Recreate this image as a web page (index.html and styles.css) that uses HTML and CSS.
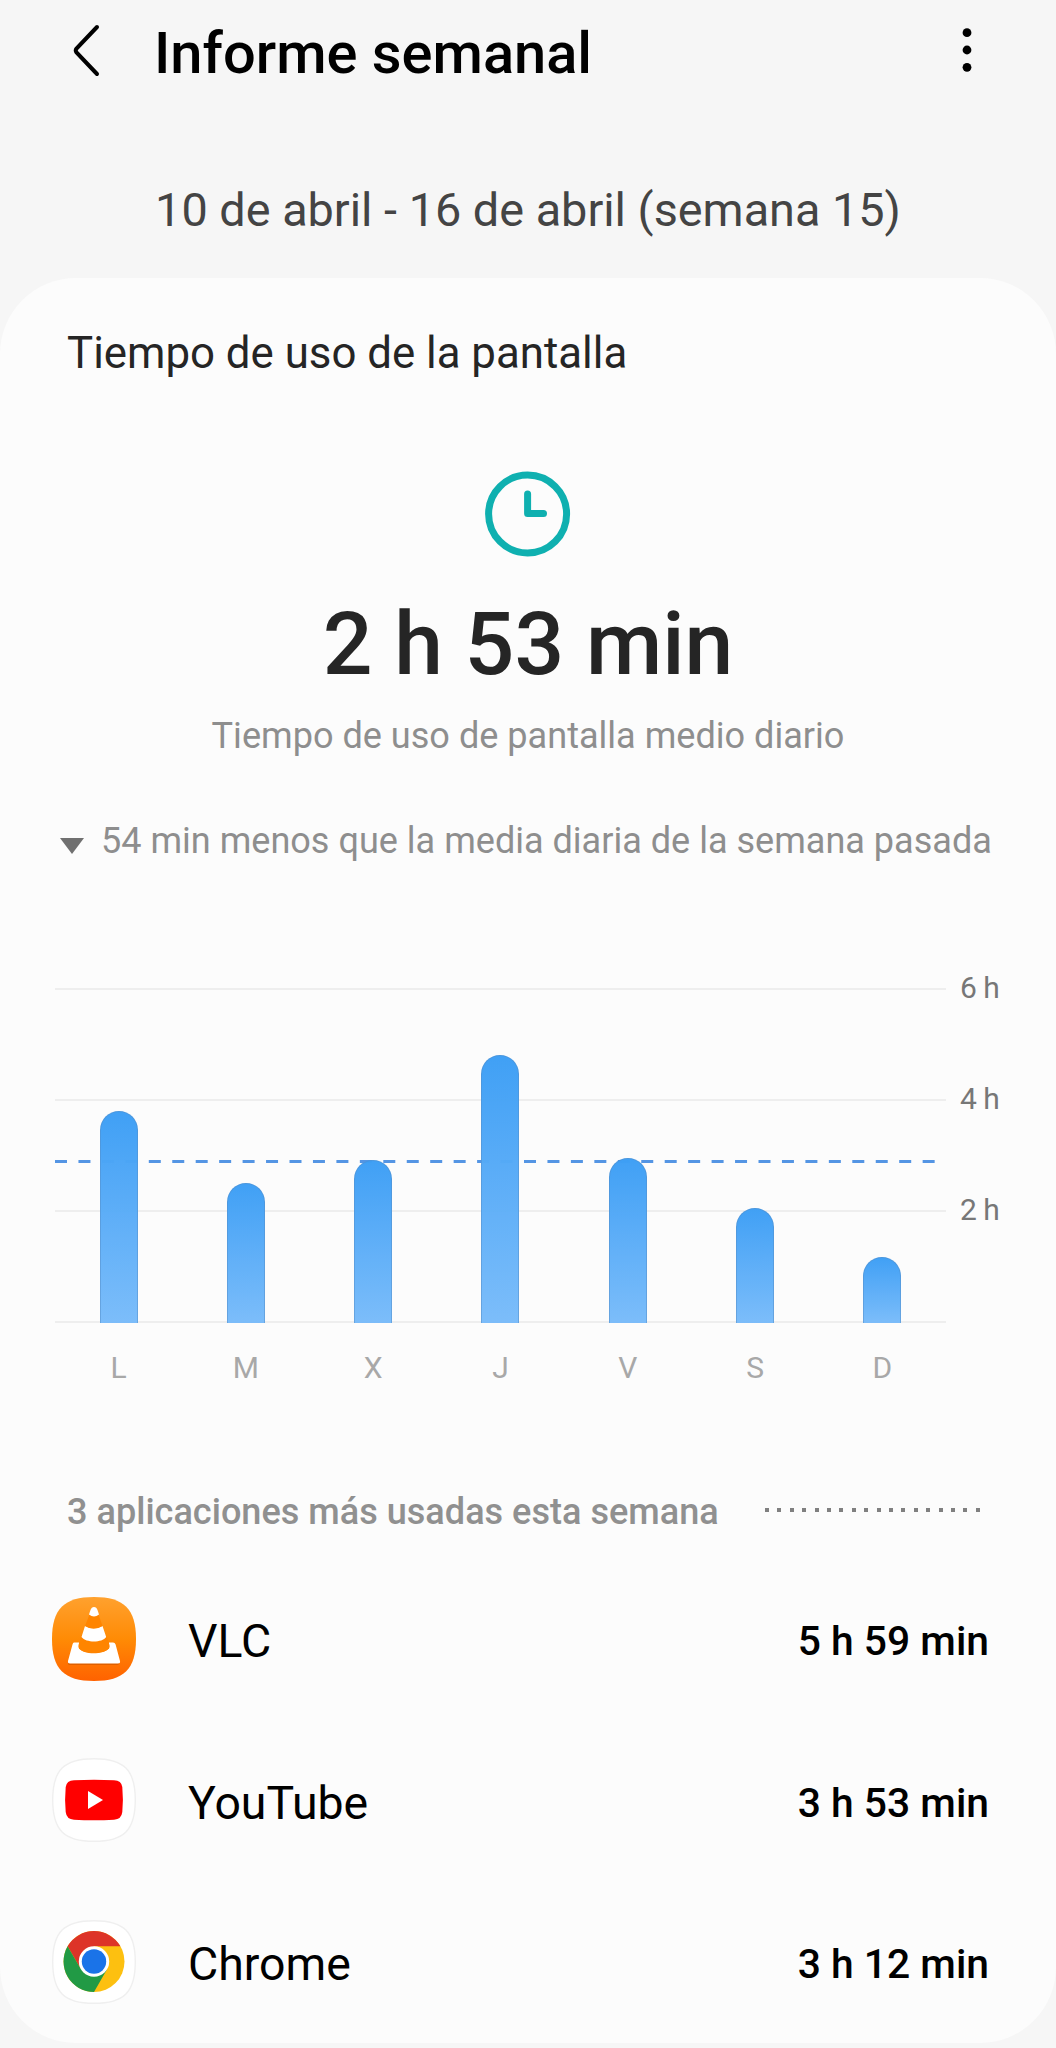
FILE: index.html
```html
<!DOCTYPE html>
<html lang="es">
<head>
  <meta charset="UTF-8">
  <meta name="viewport" content="width=device-width, initial-scale=1.0">
  <title>Informe semanal</title>
  <link rel="stylesheet" href="styles.css">
</head>
<body>
  <header class="top-bar">
    <svg class="back" width="32" height="56" viewBox="0 0 32 56">
      <path d="M28 5 L7.5 26.5 Q6 28.5 7.500 30.5 L28 52"/>
    </svg>
    <h1 class="title">Informe semanal</h1>
    <svg class="more" width="12" height="46" viewBox="0 0 12 46">
      <circle cx="6" cy="5.7" r="4.4"/>
      <circle cx="6" cy="23" r="4.4"/>
      <circle cx="6" cy="40.3" r="4.4"/>
    </svg>
  </header>
  <div class="week">10 de abril - 16 de abril (semana 15)</div>

  <main class="card">
    <h2 class="card-title">Tiempo de uso de la pantalla</h2>

    <section class="summary">
      <svg class="clock" width="86" height="86" viewBox="0 0 86 86">
        <circle cx="42.6" cy="43" r="39"/>
        <path d="M42.6 23 V42.5 H58.5"/>
      </svg>
      <div class="total">2 h 53 min</div>
      <div class="caption">Tiempo de uso de pantalla medio diario</div>
    </section>
    <div class="compare">
      <span class="arrow-down"></span>
      <span>54 min menos que la media diaria de la semana pasada</span>
    </div>

    <section class="chart">
      <div class="chart-main">
        <div class="plot">
          <div class="grid-lines">
            <i></i><i></i><i></i>
          </div>
          <svg class="average" width="891" height="333">
            <line x1="0" y1="173.5" x2="881" y2="173.5"/>
          </svg>
          <div class="bars">
            <div class="bar" style="height: 212px"></div>
            <div class="bar" style="height: 140px"></div>
            <div class="bar" style="height: 163px"></div>
            <div class="bar" style="height: 268px"></div>
            <div class="bar" style="height: 165px"></div>
            <div class="bar" style="height: 115px"></div>
            <div class="bar" style="height: 66px"></div>
          </div>
        </div>
        <div class="days">
          <span>L</span><span>M</span><span>X</span><span>J</span><span>V</span><span>S</span><span>D</span>
        </div>
      </div>
      <div class="hours">
        <span>6 h</span><span>4 h</span><span>2 h</span>
      </div>
    </section>

    <div class="section-head">
      <h3 class="section-title">3 aplicaciones más usadas esta semana</h3>
      <span class="dots"></span>
    </div>

    <ul class="apps">
      <li class="app">
        <svg class="app-icon" width="84" height="84" viewBox="0 0 84 84">
          <defs>
            <linearGradient id="vlc-bg" x1="0" y1="0" x2="0" y2="1">
              <stop offset="0" stop-color="#ffa12e"/>
              <stop offset="0.5" stop-color="#ff8b05"/>
              <stop offset="1" stop-color="#ff6200"/>
            </linearGradient>
          </defs>
          <path fill="url(#vlc-bg)" d="M42 0 C72 0 84 12 84 42 S72 84 42 84 S0 72 0 42 S12 0 42 0Z"/>
          <path fill="#c95400" opacity="0.6" d="M16 65 H67 V66.5 Q67 68 65 68 H18 Q16 68 16 66.5Z"/>
          <path fill="#fff" d="M22 45.5 H27 V51 C31 58 52 58 57 51 V45.5 H61 Q63 45.5 63.6 47.5 L68 64 Q68.5 66.5 66 66.5 H18 Q15.5 66.5 16 64 L20.5 47.5 Q21 45.5 22 45.5Z"/>
          <path fill="#ff8500" d="M29.5 38 L26.5 48 Q26 50 27 51.5 C32 57.5 52 57.5 57 51.5 Q58 50 57.5 48 L54 38Z"/>
          <path fill="#fff" d="M33 29 Q41.5 34 50.5 29 L54.2 40 C50 46 34 46 29.5 40Z"/>
          <path fill="#ff8500" d="M37.3 18 L33 29 Q41.5 34 50.5 29 L46.7 18Z"/>
          <path fill="#fff" d="M38.5 13 Q39.5 10 42 10 Q44.5 10 45.5 13 L47 17.5 Q42 21.5 37 17.5Z"/>
        </svg>
        <span class="app-name">VLC</span>
        <span class="app-time">5 h 59 min</span>
      </li>
      <li class="app">
        <svg class="app-icon" width="84" height="84" viewBox="0 0 84 84">
          <path class="icon-bg" d="M42 .7 C72 .7 83.3 12 83.3 42 S72 83.3 42 83.3 S.7 72 .7 42 S12 .7 42 .7Z"/>
          <path fill="#f00" d="M22 22.2 Q42 21.2 62 22.2 Q69.5 22.5 70.3 29 Q71.5 42 70.3 54 Q69.5 61.3 62 61.7 Q42 62.7 22 61.7 Q14.5 61.3 13.7 54 Q12.5 42 13.7 29 Q14.5 22.5 22 22.2Z"/>
          <path fill="#fff" d="M36 33 L51 42 L36 51Z"/>
        </svg>
        <span class="app-name">YouTube</span>
        <span class="app-time">3 h 53 min</span>
      </li>
      <li class="app">
        <svg class="app-icon" width="84" height="84" viewBox="0 0 84 84">
          <path class="icon-bg" d="M42 .7 C72 .7 83.3 12 83.3 42 S72 83.3 42 83.3 S.7 72 .7 42 S12 .7 42 .7Z"/>
          <circle cx="42" cy="41.5" r="30.5" fill="#fdc010"/>
          <path fill="#dd3428" d="M42 26.3 H68.4 A30.5 30.5 0 0 0 15.6 26.3 L28.8 49.1Z"/>
          <path fill="#219a45" d="M15.6 26.3 A30.5 30.5 0 0 0 42 72 L55.2 49.1 L28.8 49.1Z"/>
          <circle cx="42" cy="41.5" r="15.2" fill="#fff"/>
          <circle cx="42" cy="41.5" r="12.2" fill="#1a73e8"/>
        </svg>
        <span class="app-name">Chrome</span>
        <span class="app-time">3 h 12 min</span>
      </li>
    </ul>
  </main>
</body>
</html>
```

FILE: styles.css
```css
* {
  box-sizing: border-box;
}
body {
  margin: 0;
  height: 2048px;
  overflow: hidden;
  font-family: Roboto, "Liberation Sans", sans-serif;
  background: #f6f6f6;
  color: #000;
}
h1, h2, h3, ul {
  margin: 0;
  padding: 0;
}
.top-bar {
  display: flex;
  align-items: center;
  height: 99px;
  padding: 0 83px 0 69px;
}
.back {
  fill: none;
  stroke: #000;
  stroke-width: 4;
  stroke-linecap: round;
}
.title {
  margin-left: 53px;
  padding-top: 6px;
  font-size: 57.8px;
  line-height: 66px;
  font-weight: 500;
}
.more {
  margin-left: auto;
}
.week {
  margin-top: 81px;
  font-size: 46.8px;
  line-height: 60px;
  text-align: center;
  color: #444;
}
.card {
  margin-top: 38px;
  height: 1765px;
  padding-top: 49px;
  border-radius: 76px;
  background: #fcfcfc;
}
.card-title {
  padding-left: 67px;
  font-size: 43.8px;
  line-height: 52px;
  font-weight: 400;
  color: #252525;
}
.summary {
  display: flex;
  flex-direction: column;
  align-items: center;
  padding-top: 92px;
}
.clock {
  fill: none;
  stroke: #0fb0b0;
  stroke-width: 7;
  stroke-linecap: round;
  stroke-linejoin: round;
}
.total {
  margin-top: 37px;
  font-size: 87.6px;
  line-height: 100px;
  font-weight: 500;
  color: #252525;
}
.caption {
  margin-top: 20px;
  font-size: 36.1px;
  line-height: 44px;
  color: #8e8e8e;
}
.compare {
  display: flex;
  align-items: center;
  margin-top: 61px;
  padding-left: 60px;
  font-size: 36.05px;
  line-height: 44px;
  color: #8e8e8e;
}
.arrow-down {
  margin: 9px 17px 0 0;
  border: 12px solid transparent;
  border-top: 16px solid #707070;
  border-bottom: 0;
}
.chart {
  display: flex;
  margin-top: 125px;
  padding-left: 55px;
}
.chart-main {
  width: 891px;
}
.plot {
  display: grid;
  height: 334px;
}
.grid-lines, .average, .bars {
  grid-area: 1 / 1;
}
.grid-lines {
  border-bottom: 2px solid #eee;
}
.grid-lines i {
  display: block;
  height: 111px;
  border-top: 2px solid #eee;
}
.average line {
  stroke: #5495e4;
  stroke-width: 3;
  stroke-dasharray: 12 11.45;
}
.bars, .days {
  display: grid;
  grid-template-columns: repeat(7, 1fr);
  justify-items: center;
}
.bars {
  align-items: end;
}
.bar {
  width: 38px;
  border: 1px solid rgba(80, 140, 200, 0.5);
  border-bottom: 0;
  border-radius: 19px 19px 0 0;
  background: linear-gradient(#3d9ff5, #7abcfa);
  background-origin: border-box;
  opacity: 0.98;
}
.days {
  padding-top: 28px;
  font-size: 30px;
  line-height: 36px;
  color: #a8a8a8;
}
.hours {
  margin: -18px 0 0 14px;
  font-size: 30px;
  line-height: 36px;
  color: #777;
}
.hours span {
  display: block;
  height: 111px;
  word-spacing: -1px;
}
.section-head {
  display: flex;
  align-items: center;
  margin-top: 104px;
  padding-left: 67px;
}
.section-title {
  font-size: 36.1px;
  line-height: 44px;
  font-weight: 500;
  color: #909090;
}
.dots {
  width: 216px;
  height: 4px;
  margin: -5px 75px 0 auto;
  background: repeating-linear-gradient(90deg, #808080 0 4px, transparent 4px 12.4px);
}
.apps {
  padding-top: 24px;
  list-style: none;
}
.app {
  display: flex;
  align-items: center;
  height: 161.5px;
  padding: 0 67px 0 52px;
}
.icon-bg {
  fill: #fff;
  stroke: #efefef;
  stroke-width: 1.4;
}
.app-name {
  margin-left: 52px;
  padding-top: 5px;
  font-size: 46.4px;
  line-height: 54px;
}
.app-time {
  margin-left: auto;
  padding-top: 5px;
  font-size: 40.8px;
  line-height: 50px;
  font-weight: 500;
}
```
